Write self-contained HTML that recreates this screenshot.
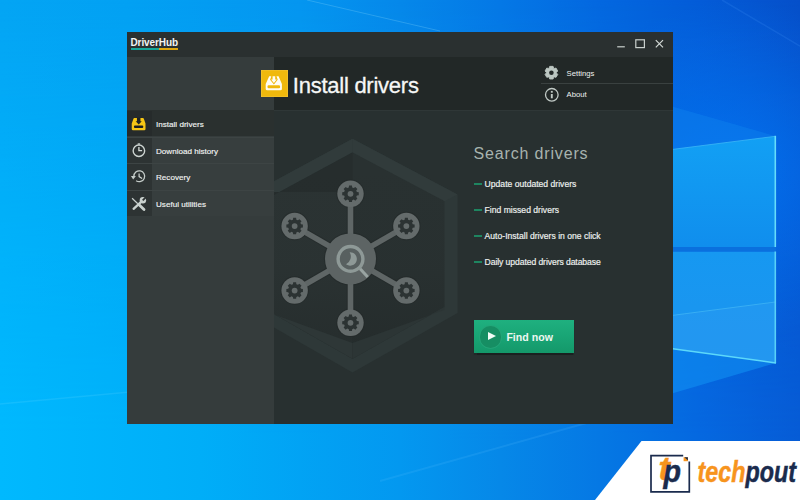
<!DOCTYPE html>
<html lang="en">
<head>
<meta charset="utf-8">
<title>DriverHub</title>
<style>
html,body{margin:0;padding:0;}
body{width:800px;height:500px;overflow:hidden;position:relative;background:#0a8ee8;font-family:"Liberation Sans",sans-serif;}
#wall{position:absolute;left:0;top:0;width:800px;height:500px;}
#win{position:absolute;left:127px;top:32px;width:546px;height:392px;background:#283030;overflow:hidden;}
#titlebar{position:absolute;left:0;top:0;width:546px;height:25px;background:#2a3030;}
#brand{position:absolute;left:3.5px;top:4.9px;font-weight:bold;font-size:10px;line-height:12px;color:#f2f4f3;letter-spacing:-0.1px;white-space:nowrap;}
#brand-ul{position:absolute;left:3.5px;top:15.5px;width:47.5px;height:2px;background:linear-gradient(90deg,#14a79a 0,#14a79a 28.3px,#e0a70d 28.3px,#e0a70d 100%);}
#ctrl{position:absolute;left:480px;top:0;width:66px;height:25px;}
#header{position:absolute;left:0;top:25px;width:546px;height:53px;background:#222827;}
#header-left{position:absolute;left:0;top:0;width:147px;height:53px;background:#353c3c;}
#hicon{position:absolute;left:134px;top:13.1px;width:26.8px;height:26.5px;background:#f0b90d;box-shadow:inset 0 0 0 0.6px #f4c53a;}
#htitle{position:absolute;left:165.8px;top:10.6px;font-size:22px;line-height:36px;color:#f6f7f6;white-space:nowrap;letter-spacing:-0.25px;-webkit-text-stroke:0.3px #f6f7f6;}
#hmenu{position:absolute;left:414px;top:0;width:132px;height:53px;}
#hmenu .sep{position:absolute;left:0;top:26.2px;width:132px;height:1px;background:#3a4140;}
#hmenu .lbl{position:absolute;left:25.6px;font-size:7.7px;line-height:10px;color:#eef1ef;white-space:nowrap;}
#sidebar{position:absolute;left:0;top:78px;width:147px;height:314px;background:#353c3c;}
.row{position:absolute;left:0;width:147px;height:25.6px;background:#373e3e;border-top:1px solid #3d4444;margin-top:-0.5px;}
.row .ic{position:absolute;left:0;top:0;width:25px;height:100%;background:#2d3333;}
.row .tx{position:absolute;left:29px;top:9.1px;font-size:8.1px;line-height:10px;color:#f1f3f2;white-space:nowrap;-webkit-text-stroke:0.15px #f1f3f2;}
.icn{position:absolute;left:0;top:0;width:25px;height:26px;}
.row.active{background:#2a302f;border-top-color:#2a302f;}
.row.active .ic{background:#262b2b;}
#content{position:absolute;left:147px;top:78px;width:399px;height:314px;background:#283030;overflow:hidden;box-shadow:inset 0 1px 0 #2f3737;}
#gfx{position:absolute;left:0;top:0;width:399px;height:314px;}
#stitle{position:absolute;left:199.5px;top:34px;font-size:16px;line-height:20px;color:#a7b3ae;white-space:nowrap;letter-spacing:0.84px;}
.bul{position:absolute;left:200px;font-size:8.6px;line-height:10px;color:#eef1ef;white-space:nowrap;padding-left:10.6px;-webkit-text-stroke:0.18px #eef1ef;}
.bul:before{content:"";position:absolute;left:-0.5px;top:4.1px;width:8.5px;height:1.6px;background:#1e8560;}
#btn{position:absolute;left:200px;top:209.6px;width:100px;height:33.6px;background:linear-gradient(180deg,#1fb07f 0,#19a575 50%,#14986a 100%);box-shadow:0 1.5px 1px #1a2020;}
#btn .circ{position:absolute;left:5.7px;top:6.4px;width:21.6px;height:21.6px;border-radius:50%;background:#168e63;box-shadow:0 0 0 0.8px #25a679;}
#btn .tri{position:absolute;left:13.6px;top:12.9px;width:0;height:0;border-left:8.4px solid #f2fbf6;border-top:4.3px solid transparent;border-bottom:4.3px solid transparent;}
#btn .bt{position:absolute;left:32.4px;top:10.3px;font-size:10.6px;font-weight:bold;line-height:14px;color:#ecf7f1;white-space:nowrap;}
#logo{position:absolute;left:590px;top:441px;width:210px;height:59px;}
</style>
</head>
<body>
<svg id="wall" viewBox="0 0 800 500">
<defs>
<linearGradient id="bgt" x1="0" y1="0" x2="1" y2="0">
<stop offset="0" stop-color="#04a5f4"/>
<stop offset="0.16" stop-color="#03a1f3"/>
<stop offset="0.375" stop-color="#0596f0"/>
<stop offset="0.5" stop-color="#0688ea"/>
<stop offset="0.625" stop-color="#0578e6"/>
<stop offset="0.75" stop-color="#0468e0"/>
<stop offset="0.875" stop-color="#045cd8"/>
<stop offset="1" stop-color="#0650ca"/>
</linearGradient>
<linearGradient id="bgb" x1="0" y1="0" x2="1" y2="0">
<stop offset="0" stop-color="#00b9fe"/>
<stop offset="0.25" stop-color="#00aef8"/>
<stop offset="0.5" stop-color="#0398f0"/>
<stop offset="0.625" stop-color="#0688e8"/>
<stop offset="0.75" stop-color="#0578e4"/>
<stop offset="0.875" stop-color="#0568e0"/>
<stop offset="1" stop-color="#065cd6"/>
</linearGradient>
<linearGradient id="vm" x1="0" y1="0" x2="0" y2="1">
<stop offset="0" stop-color="#000"/>
<stop offset="0.5" stop-color="#a8a8a8"/>
<stop offset="0.88" stop-color="#fff"/>
</linearGradient>
<mask id="vmask"><rect width="800" height="500" fill="url(#vm)"/></mask>
<radialGradient id="rglow" cx="735" cy="170" r="170" gradientUnits="userSpaceOnUse">
<stop offset="0" stop-color="#0274f2" stop-opacity="0.8"/>
<stop offset="1" stop-color="#0274f2" stop-opacity="0"/>
</radialGradient>
<linearGradient id="pane1" x1="0" y1="0" x2="0" y2="1">
<stop offset="0" stop-color="#12a0f4"/>
<stop offset="1" stop-color="#108eed"/>
</linearGradient>
<linearGradient id="pane2" x1="0" y1="0" x2="0" y2="1">
<stop offset="0" stop-color="#1698f1"/>
<stop offset="1" stop-color="#1c94ef"/>
</linearGradient>
</defs>
<rect width="800" height="500" fill="url(#bgt)"/>
<rect width="800" height="500" fill="url(#bgb)" mask="url(#vmask)"/>
<rect x="560" width="240" height="440" fill="url(#rglow)"/>
<path d="M307 0 L440 31" stroke="#7fd0fa" stroke-opacity="0.3" stroke-width="1" fill="none"/>
<path d="M380 481 L590 422" stroke="#60c0ff" stroke-opacity="0.16" stroke-width="2" fill="none"/>
<path d="M0 404 L130 392" stroke="#60d8ff" stroke-opacity="0.2" stroke-width="1.5" fill="none"/>
<path d="M722 0 L800 46" stroke="#50a0ff" stroke-opacity="0.16" stroke-width="1.5" fill="none"/>
<polygon points="660,103 775,136 660,152" fill="#1490f2" opacity="0.3"/>
<polygon points="660,347 776,363 660,397" fill="#1090f2" opacity="0.6"/>
<polygon points="660,151 775.3,136.3 775.3,247 660,247" fill="url(#pane1)"/>
<polygon points="660,251.5 775.3,251.5 775.3,363 660,347" fill="url(#pane2)"/>
<polygon points="660,317 775.3,302 775.3,363 660,347" fill="#2a9af1" opacity="0.5"/>
<rect x="660" y="247" width="116" height="4.5" fill="#0a70de"/>
<path d="M660 151 L775.3 136.3" stroke="#3cb8f6" stroke-width="0.8" fill="none"/>
<path d="M660 317 L775.3 302" stroke="#3fb4f5" stroke-width="0.8" fill="none"/>
<path d="M775.3 135.8 L775.3 247" stroke="#66dcfa" stroke-width="1.6" fill="none"/>
<path d="M775.3 251.5 L775.3 363.3" stroke="#58d0f8" stroke-width="1.6" fill="none"/>
<path d="M660 347 L776 363" stroke="#5cd8fa" stroke-width="1.5" fill="none"/>
</svg>

<div id="win">
  <div id="titlebar">
    <div id="brand">DriverHub</div>
    <div id="brand-ul"></div>
    <svg id="ctrl" viewBox="0 0 66 25">
      <rect x="10.2" y="14.2" width="7.6" height="1.2" fill="#c9d0cd"/>
      <rect x="28.8" y="7.8" width="8.6" height="7.8" fill="none" stroke="#c9d0cd" stroke-width="1.2"/>
      <path d="M48.8 8.2 L56 15.4 M56 8.2 L48.8 15.4" stroke="#d4dad7" stroke-width="1.2" fill="none"/>
    </svg>
  </div>
  <div id="header">
    <div id="header-left"></div>
    <div id="hicon"><svg width="27" height="27" viewBox="0 0 27 27" style="position:absolute;left:0;top:0">
<g transform="translate(4.7 6.3)">
<path d="M3.5 0 L5.6 0 L4.4 3.5 L8.2 8.2 L12 3.5 L10.8 0 L12.9 0 L16.2 7.6 L16.2 12.6 Q16.2 14 14.8 14 L1.4 14 Q0 14 0 12.6 L0 7.6 Z" fill="#fffdf4"/>
<path d="M6.9 0 L9.5 0 L9.5 3.3 L11 3.3 L8.2 6.6 L5.4 3.3 L6.9 3.3 Z" fill="#fffdf4"/>
<rect x="1.8" y="9" width="12.6" height="2.9" rx="1.2" fill="#efb80a"/>
</g></svg></div>
    <div id="htitle">Install drivers</div>
    <div id="hmenu">
      <div class="sep"></div>
      <svg width="20" height="53" viewBox="0 0 20 53" style="position:absolute;left:0;top:0">
        <g transform="translate(10.4 15.7) scale(0.95)"><path d="M-2.41 -4.72 L-1.79 -6.66 L1.79 -6.66 L2.41 -4.72 L2.89 -4.44 L4.88 -4.88 L6.66 -1.79 L5.29 -0.28 L5.29 0.28 L6.66 1.79 L4.88 4.88 L2.89 4.44 L2.41 4.72 L1.79 6.66 L-1.79 6.66 L-2.41 4.72 L-2.89 4.44 L-4.88 4.88 L-6.66 1.79 L-5.29 0.28 L-5.29 -0.28 L-6.66 -1.79 L-4.88 -4.88 L-2.89 -4.44Z" fill="#bcc7c2" stroke="#bcc7c2" stroke-width="0.9" stroke-linejoin="round"/><circle r="2.4" fill="#232928"/></g>
        <circle cx="10.8" cy="37.8" r="6.3" fill="none" stroke="#c0c9c5" stroke-width="1.3"/>
        <rect x="9.85" y="37" width="1.9" height="4.3" fill="#c0c9c5"/>
        <rect x="9.85" y="33.9" width="1.9" height="1.8" fill="#c0c9c5"/>
      </svg>
      <div class="lbl" style="top:12px">Settings</div>
      <div class="lbl" style="top:33.3px">About</div>
    </div>
  </div>
  <div id="sidebar">
    <div class="row active" style="top:0"><div class="ic"><svg class="icn" viewBox="0 0 25 26"><g transform="translate(4.75 7)">
<path d="M2.6 0 L11.2 0 Q11.8 0 12 0.6 L13.75 5.6 L13.75 11 Q13.75 12.25 12.5 12.25 L1.25 12.25 Q0 12.25 0 11 L0 5.6 L1.8 0.6 Q2 0 2.6 0 Z" fill="#f6c615"/>
<path d="M5.2 -0.2 L8.7 -0.2 L8.7 3.2 L10 3.2 L6.95 6.5 L3.9 3.2 L5.2 3.2 Z" fill="#1f2424"/>
<rect x="2.2" y="7.6" width="9.3" height="2.4" rx="1" fill="#1a1e22"/>
</g></svg></div><div class="tx">Install drivers</div></div>
    <div class="row" style="top:27px"><div class="ic"><svg class="icn" viewBox="0 0 25 26">
<circle cx="11.9" cy="12.75" r="5.75" fill="none" stroke="#cdd4d1" stroke-width="1.4"/>
<rect x="10.7" y="5.3" width="2.4" height="1.4" fill="#c5cdca"/>
<path d="M11.9 9.1 L11.9 12.7 L15.1 12.7" fill="none" stroke="#d5dbd8" stroke-width="1.3"/>
</svg></div><div class="tx">Download history</div></div>
    <div class="row" style="top:53.5px"><div class="ic"><svg class="icn" viewBox="0 0 25 26">
<path d="M6.85 12.25 A5.4 5.4 0 1 1 9.15 16.67" fill="none" stroke="#c5cdca" stroke-width="1.3"/>
<polygon points="3.9,12 8.9,12 6.2,15.4" fill="#c5cdca"/>
<path d="M12.1 9.4 L12.1 12.6 L15.1 14.6" fill="none" stroke="#d0d7d4" stroke-width="1.2"/>
</svg></div><div class="tx">Recovery</div></div>
    <div class="row" style="top:80px"><div class="ic"><svg class="icn" viewBox="0 0 25 26">
<path d="M5.1 7.2 L10.8 12.7" stroke="#c9d1ce" stroke-width="1.2" fill="none"/>
<path d="M11.8 13.6 L17.0 18.6" stroke="#c9d1ce" stroke-width="2.8" stroke-linecap="round" fill="none"/>
<path d="M6.6 17.8 L14.4 10.6" stroke="#c9d1ce" stroke-width="2.3" stroke-linecap="round" fill="none"/>
<circle cx="15.9" cy="9.2" r="3.2" fill="#c9d1ce"/>
<rect x="15.6" y="8.3" width="5" height="1.9" fill="#2d3333" transform="rotate(-45 15.9 9.2)"/>
</svg></div><div class="tx">Useful utilities</div></div>
  </div>
  <div id="content">
    <svg id="gfx" viewBox="0 0 399 314">
<defs><linearGradient id="ish" x1="0" y1="0" x2="0" y2="1"><stop offset="0" stop-color="#1e2424" stop-opacity="0"/><stop offset="0.55" stop-color="#1e2424" stop-opacity="0.05"/><stop offset="1" stop-color="#1e2424" stop-opacity="0.42"/></linearGradient></defs>
<polygon points="78.5,28.75 183.5,84.5 183.5,203 78.5,262.5 -25.5,203 -25.5,85" fill="#2e3838"/>
<polygon points="78.5,28.75 78.5,42.5 -12.5,91.7 -25.5,85" fill="#313b3b"/>
<polygon points="78.5,28.75 183.5,84.5 170.5,91.2 78.5,42.5" fill="#313b3b"/>
<polygon points="78.5,42.5 170.5,91.2 170.5,197 78.5,248.75 -12.5,197 -12.5,91.7" fill="#293131"/>
<polygon points="78.5,82 78.5,248.75 -12.5,197 -12.5,82" fill="#2b3333"/>
<polygon points="78.5,42.5 -12.5,91.7 -12.5,82 78.5,82" fill="#262d2d"/>
<polygon points="78.5,42.5 170.5,91.2 170.5,197 78.5,248.75 -12.5,197 -12.5,91.7" fill="url(#ish)"/>
<polygon points="78.5,248.75 -12.5,197 -12.5,200 78.5,233" fill="#2e3737"/>
<polygon points="78.5,248.75 170.5,197 170.5,200 78.5,233" fill="#2c3535"/>
<circle cx="76.50" cy="83.80" r="14.2" fill="#222828" opacity="0.55"/>
<circle cx="132.36" cy="116.05" r="14.2" fill="#222828" opacity="0.55"/>
<circle cx="132.36" cy="180.55" r="14.2" fill="#222828" opacity="0.55"/>
<circle cx="76.50" cy="212.80" r="14.2" fill="#222828" opacity="0.55"/>
<circle cx="20.64" cy="180.55" r="14.2" fill="#222828" opacity="0.55"/>
<circle cx="20.64" cy="116.05" r="14.2" fill="#222828" opacity="0.55"/>
<circle cx="76.5" cy="148.9" r="26.6" fill="#222828" opacity="0.5"/>
<line x1="76.5" y1="148.3" x2="76.50" y2="83.80" stroke="#222828" stroke-opacity="0.5" stroke-width="7.6"/>
<line x1="76.5" y1="148.3" x2="132.36" y2="116.05" stroke="#222828" stroke-opacity="0.5" stroke-width="7.6"/>
<line x1="76.5" y1="148.3" x2="132.36" y2="180.55" stroke="#222828" stroke-opacity="0.5" stroke-width="7.6"/>
<line x1="76.5" y1="148.3" x2="76.50" y2="212.80" stroke="#222828" stroke-opacity="0.5" stroke-width="7.6"/>
<line x1="76.5" y1="148.3" x2="20.64" y2="180.55" stroke="#222828" stroke-opacity="0.5" stroke-width="7.6"/>
<line x1="76.5" y1="148.3" x2="20.64" y2="116.05" stroke="#222828" stroke-opacity="0.5" stroke-width="7.6"/>
<line x1="76.5" y1="148.3" x2="76.50" y2="83.80" stroke="#5f6666" stroke-width="5.6"/>
<line x1="76.5" y1="148.3" x2="132.36" y2="116.05" stroke="#5f6666" stroke-width="5.6"/>
<line x1="76.5" y1="148.3" x2="132.36" y2="180.55" stroke="#5f6666" stroke-width="5.6"/>
<line x1="76.5" y1="148.3" x2="76.50" y2="212.80" stroke="#5f6666" stroke-width="5.6"/>
<line x1="76.5" y1="148.3" x2="20.64" y2="180.55" stroke="#5f6666" stroke-width="5.6"/>
<line x1="76.5" y1="148.3" x2="20.64" y2="116.05" stroke="#5f6666" stroke-width="5.6"/>
<circle cx="76.50" cy="83.80" r="13.2" fill="#646b6b"/>
<path transform="translate(76.50 83.80)" d="M-1.71 -6.38 L-1.46 -8.27 L1.46 -8.27 L1.71 -6.38 L3.30 -5.72 L4.82 -6.88 L6.88 -4.82 L5.72 -3.30 L6.38 -1.71 L8.27 -1.46 L8.27 1.46 L6.38 1.71 L5.72 3.30 L6.88 4.82 L4.82 6.88 L3.30 5.72 L1.71 6.38 L1.46 8.27 L-1.46 8.27 L-1.71 6.38 L-3.30 5.72 L-4.82 6.88 L-6.88 4.82 L-5.72 3.30 L-6.38 1.71 L-8.27 1.46 L-8.27 -1.46 L-6.38 -1.71 L-5.72 -3.30 L-6.88 -4.82 L-4.82 -6.88 L-3.30 -5.72Z" fill="#2c3333"/>
<circle cx="76.50" cy="83.80" r="2.9" fill="#646b6b"/>
<circle cx="132.36" cy="116.05" r="13.2" fill="#646b6b"/>
<path transform="translate(132.36 116.05)" d="M-1.71 -6.38 L-1.46 -8.27 L1.46 -8.27 L1.71 -6.38 L3.30 -5.72 L4.82 -6.88 L6.88 -4.82 L5.72 -3.30 L6.38 -1.71 L8.27 -1.46 L8.27 1.46 L6.38 1.71 L5.72 3.30 L6.88 4.82 L4.82 6.88 L3.30 5.72 L1.71 6.38 L1.46 8.27 L-1.46 8.27 L-1.71 6.38 L-3.30 5.72 L-4.82 6.88 L-6.88 4.82 L-5.72 3.30 L-6.38 1.71 L-8.27 1.46 L-8.27 -1.46 L-6.38 -1.71 L-5.72 -3.30 L-6.88 -4.82 L-4.82 -6.88 L-3.30 -5.72Z" fill="#2c3333"/>
<circle cx="132.36" cy="116.05" r="2.9" fill="#646b6b"/>
<circle cx="132.36" cy="180.55" r="13.2" fill="#646b6b"/>
<path transform="translate(132.36 180.55)" d="M-1.71 -6.38 L-1.46 -8.27 L1.46 -8.27 L1.71 -6.38 L3.30 -5.72 L4.82 -6.88 L6.88 -4.82 L5.72 -3.30 L6.38 -1.71 L8.27 -1.46 L8.27 1.46 L6.38 1.71 L5.72 3.30 L6.88 4.82 L4.82 6.88 L3.30 5.72 L1.71 6.38 L1.46 8.27 L-1.46 8.27 L-1.71 6.38 L-3.30 5.72 L-4.82 6.88 L-6.88 4.82 L-5.72 3.30 L-6.38 1.71 L-8.27 1.46 L-8.27 -1.46 L-6.38 -1.71 L-5.72 -3.30 L-6.88 -4.82 L-4.82 -6.88 L-3.30 -5.72Z" fill="#2c3333"/>
<circle cx="132.36" cy="180.55" r="2.9" fill="#646b6b"/>
<circle cx="76.50" cy="212.80" r="13.2" fill="#646b6b"/>
<path transform="translate(76.50 212.80)" d="M-1.71 -6.38 L-1.46 -8.27 L1.46 -8.27 L1.71 -6.38 L3.30 -5.72 L4.82 -6.88 L6.88 -4.82 L5.72 -3.30 L6.38 -1.71 L8.27 -1.46 L8.27 1.46 L6.38 1.71 L5.72 3.30 L6.88 4.82 L4.82 6.88 L3.30 5.72 L1.71 6.38 L1.46 8.27 L-1.46 8.27 L-1.71 6.38 L-3.30 5.72 L-4.82 6.88 L-6.88 4.82 L-5.72 3.30 L-6.38 1.71 L-8.27 1.46 L-8.27 -1.46 L-6.38 -1.71 L-5.72 -3.30 L-6.88 -4.82 L-4.82 -6.88 L-3.30 -5.72Z" fill="#2c3333"/>
<circle cx="76.50" cy="212.80" r="2.9" fill="#646b6b"/>
<circle cx="20.64" cy="180.55" r="13.2" fill="#646b6b"/>
<path transform="translate(20.64 180.55)" d="M-1.71 -6.38 L-1.46 -8.27 L1.46 -8.27 L1.71 -6.38 L3.30 -5.72 L4.82 -6.88 L6.88 -4.82 L5.72 -3.30 L6.38 -1.71 L8.27 -1.46 L8.27 1.46 L6.38 1.71 L5.72 3.30 L6.88 4.82 L4.82 6.88 L3.30 5.72 L1.71 6.38 L1.46 8.27 L-1.46 8.27 L-1.71 6.38 L-3.30 5.72 L-4.82 6.88 L-6.88 4.82 L-5.72 3.30 L-6.38 1.71 L-8.27 1.46 L-8.27 -1.46 L-6.38 -1.71 L-5.72 -3.30 L-6.88 -4.82 L-4.82 -6.88 L-3.30 -5.72Z" fill="#2c3333"/>
<circle cx="20.64" cy="180.55" r="2.9" fill="#646b6b"/>
<circle cx="20.64" cy="116.05" r="13.2" fill="#646b6b"/>
<path transform="translate(20.64 116.05)" d="M-1.71 -6.38 L-1.46 -8.27 L1.46 -8.27 L1.71 -6.38 L3.30 -5.72 L4.82 -6.88 L6.88 -4.82 L5.72 -3.30 L6.38 -1.71 L8.27 -1.46 L8.27 1.46 L6.38 1.71 L5.72 3.30 L6.88 4.82 L4.82 6.88 L3.30 5.72 L1.71 6.38 L1.46 8.27 L-1.46 8.27 L-1.71 6.38 L-3.30 5.72 L-4.82 6.88 L-6.88 4.82 L-5.72 3.30 L-6.38 1.71 L-8.27 1.46 L-8.27 -1.46 L-6.38 -1.71 L-5.72 -3.30 L-6.88 -4.82 L-4.82 -6.88 L-3.30 -5.72Z" fill="#2c3333"/>
<circle cx="20.64" cy="116.05" r="2.9" fill="#646b6b"/>
<circle cx="76.5" cy="148.9" r="25.5" fill="#5d6464"/>
<circle cx="76.5" cy="148.9" r="12.4" fill="#586060" stroke="#8e9997" stroke-width="3.4"/>
<line x1="86.1" y1="158.70000000000002" x2="93.7" y2="167.1" stroke="#99a4a2" stroke-width="3" stroke-linecap="butt"/>
<path d="M75.65 142.30 A6.7 6.7 0 1 1 72.05 154.30 A8.6 8.6 0 0 0 75.65 142.30Z" fill="#8e9997"/>
</svg>
    <div id="stitle">Search drivers</div>
    <div class="bul" style="top:69.4px">Update outdated drivers</div>
    <div class="bul" style="top:95.4px">Find missed drivers</div>
    <div class="bul" style="top:121.4px">Auto-Install drivers in one click</div>
    <div class="bul" style="top:147.4px;letter-spacing:-0.08px">Daily updated drivers database</div>
    <div id="btn"><div class="circ"></div><div class="tri"></div><div class="bt">Find now</div></div>
  </div>
</div>

<svg id="logo" viewBox="590 441 210 59">
<polygon points="641.5,441 800,441 800,500 595,500" fill="#ffffff"/>
<path d="M683.2 455.7 L651 455.7 L651 491.8 L689.3 491.8 L689.3 461.6" fill="none" stroke="#1a2b4d" stroke-width="1.7"/>
<polygon points="683.6,457.2 687.9,457.2 687.9,461.2 683.6,461.2" fill="#f7941d"/>
<polygon points="684.4,457.2 687.9,457.2 687.9,460.6" fill="#1a2b4d"/>
<text x="658.6" y="480" font-family="'Liberation Sans',sans-serif" font-style="italic" font-weight="bold" font-size="34" fill="#f7941d" stroke="#f7941d" stroke-width="0.5" textLength="11.5" lengthAdjust="spacingAndGlyphs">t</text>
<text x="663.6" y="481.6" font-family="'Liberation Sans',sans-serif" font-style="italic" font-weight="bold" font-size="32" fill="#1a2b4d" stroke="#1a2b4d" stroke-width="0.5" textLength="17.5" lengthAdjust="spacingAndGlyphs">p</text>
<text x="697.5" y="482.2" font-family="'Liberation Sans',sans-serif" font-style="italic" font-weight="bold" font-size="29.5" stroke-width="0.5" textLength="98.5" lengthAdjust="spacingAndGlyphs"><tspan fill="#f7941d" stroke="#f7941d">tech</tspan><tspan fill="#1a2b4d" stroke="#1a2b4d">pout</tspan></text>
</svg>
</body>
</html>
